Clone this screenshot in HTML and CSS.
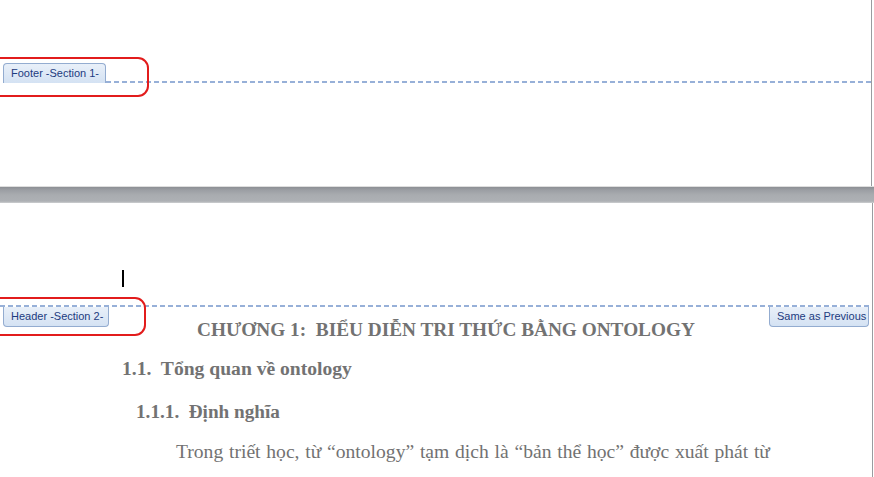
FILE: index.html
```html
<!DOCTYPE html>
<html>
<head>
<meta charset="utf-8">
<link rel="stylesheet" href="styles.css">
</head>
<body>
<div class="view">
  <div class="page page-top">
    <div class="footer-bar">
      <div class="tab tab-up">Footer -Section 1-</div>
      <div class="dash"></div>
      <div class="mark mark-footer"></div>
    </div>
  </div>
  <div class="gap"></div>
  <div class="page page-bottom">
    <div class="header-zone">
      <div class="cursor"></div>
      <div class="dash dash-full"></div>
      <div class="tab tab-down tab-left">Header -Section 2-</div>
      <div class="tab tab-down tab-right">Same as Previous</div>
      <div class="mark mark-header"></div>
    </div>
    <div class="content">
      <h1 class="chapter">CHƯƠNG 1:&nbsp; BIỂU DIỄN TRI THỨC BẰNG ONTOLOGY</h1>
      <h2 class="sec">1.1.&nbsp; Tổng quan về ontology</h2>
      <h3 class="subsec">1.1.1.&nbsp; Định nghĩa</h3>
      <p class="para">Trong triết học, từ “ontology” tạm dịch là “bản thể học” được xuất phát từ tiếng Hy Lạp: onto (tồn tại) và logia (học thuyết), có nghĩa là môn học nghiên cứu về sự tồn tại của các thực thể.</p>
    </div>
  </div>
</div>
</body>
</html>
```
FILE: styles.css
```css
html, body {
  margin: 0;
  padding: 0;
  background: #ffffff;
}
.view {
  width: 874px;
  height: 477px;
  overflow: hidden;
}
.page {
  width: 872px;
  background: #ffffff;
  border-right: 1px solid #9a9ca0;
  position: relative;
}
.page-top {
  height: 186px;
  padding-top: 63px;
  box-sizing: border-box;
}
.gap {
  width: 874px;
  height: 17px;
  background: linear-gradient(#dedede 0, #dedede 1px, #8c8f94 1px, #9b9ea3 4px, #a9acb0 9px, #adb0b4 15px, #b9bbbe 16px, #d0d2d4 17px);
}
.footer-bar {
  display: flex;
  align-items: flex-end;
  padding-left: 3px;
  position: relative;
}
.dash {
  flex: 1;
  height: 2px;
  background: repeating-linear-gradient(90deg, #97b0d8 0, #97b0d8 5px, transparent 5px, transparent 8px);
}
.tab {
  font-family: "Liberation Sans", Arial, sans-serif;
  font-size: 11px;
  color: #1d3b80;
  height: 19px;
  line-height: 19px;
  padding: 0 6px 0 7px;
  box-sizing: border-box;
  border: 1px solid #93acd0;
  background: linear-gradient(#e9f0f9, #d4e2f3);
  white-space: nowrap;
}
.tab-up {
  width: 103px;
  height: 20px;
  border-bottom: none;
  border-radius: 4px 4px 0 0;
}
.tab-down {
  position: absolute;
  top: 104px;
  height: 20px;
  border-top: none;
  border-radius: 0 0 4px 4px;
}
.tab-left {
  left: 3px;
  width: 106px;
}
.tab-right {
  left: 769px;
  width: 100px;
}
.mark {
  position: absolute;
  border: 2px solid #e21c1c;
  border-radius: 11px;
  box-sizing: border-box;
  pointer-events: none;
}
.mark-footer {
  left: -14px;
  top: -6px;
  width: 163px;
  height: 40px;
}
.mark-header {
  left: -14px;
  top: 94px;
  width: 160px;
  height: 39px;
}
.header-zone {
  position: relative;
  padding-top: 67px;
}
.cursor {
  width: 2px;
  height: 17px;
  margin-left: 122px;
  background: #000000;
}
.dash-full {
  margin-top: 18px;
  width: 872px;
  flex: none;
}
.content {
  padding-left: 122px;
  width: 648px;
  font-family: "Liberation Serif", "Times New Roman", serif;
  color: #727272;
}
.chapter {
  margin: 0;
  padding-top: 11px;
  padding-left: 0;
  font-size: 19.3px;
  line-height: 24px;
  text-align: center;
  font-weight: bold;
}
.sec {
  margin: 0;
  padding-top: 15px;
  font-size: 19.6px;
  line-height: 24px;
  font-weight: bold;
}
.subsec {
  margin: 0;
  padding-top: 19px;
  padding-left: 14px;
  font-size: 19.2px;
  line-height: 24px;
  font-weight: bold;
}
.para {
  margin: 0;
  padding-top: 10px;
  font-size: 19.6px;
  line-height: 35px;
  text-indent: 54px;
  text-align: justify;
}
```
